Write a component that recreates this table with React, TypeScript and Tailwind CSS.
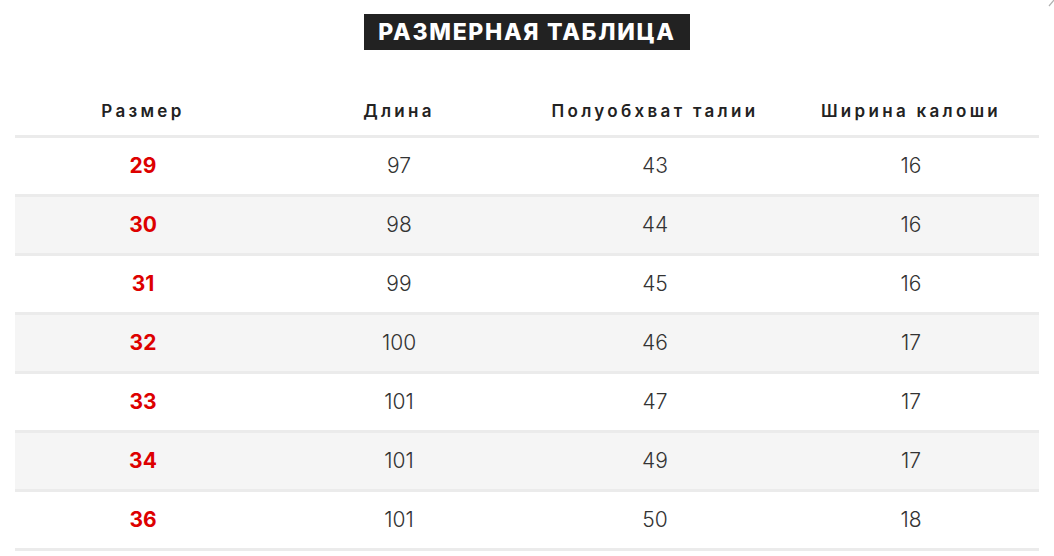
const rows = [
  ["29", "97", "43", "16"],
  ["30", "98", "44", "16"],
  ["31", "99", "45", "16"],
  ["32", "100", "46", "17"],
  ["33", "101", "47", "17"],
  ["34", "101", "49", "17"],
  ["36", "101", "50", "18"],
];

const headers = ["Размер", "Длина", "Полуобхват талии", "Ширина калоши"];

export default function App() {
  return (
    <div className="relative min-h-[556px] w-[1054px] bg-white font-['Inter',sans-serif]">
      {/* corner mark */}
      <svg className="absolute right-0 top-0" width="8" height="8" viewBox="0 0 8 8">
        <line x1="3" y1="6" x2="8" y2="0" stroke="#b0b0b0" strokeWidth="1.2" />
      </svg>

      <div className="flex justify-center pt-[14px]">
        <h2 className="flex h-[36px] w-[326px] items-center justify-center bg-[#222222] text-[23px] font-extrabold uppercase tracking-[1.7px] text-white">
          Размерная таблица
        </h2>
      </div>

      <div className="mx-[15px] mt-[37px]">
        <div className="grid h-[51px] grid-cols-4 items-center border-b-[3px] border-[#ebebeb]">
          {headers.map((h) => (
            <div key={h} className="pt-[1px] text-center text-[17px] font-semibold tracking-[3.3px] text-[#222222]">
              {h}
            </div>
          ))}
        </div>
        {rows.map((r, i) => (
          <div
            key={r[0]}
            className={`grid h-[59px] grid-cols-4 items-center border-b-[3px] border-[#ebebeb] ${
              i % 2 === 1 ? "bg-[#f5f5f5]" : "bg-white"
            }`}
          >
            <div className="text-center text-[21px] font-bold text-[#dd0000]">{r[0]}</div>
            <div className="text-center text-[21px] font-light text-[#333333]">{r[1]}</div>
            <div className="text-center text-[21px] font-light text-[#333333]">{r[2]}</div>
            <div className="text-center text-[21px] font-light text-[#333333]">{r[3]}</div>
          </div>
        ))}
      </div>
    </div>
  );
}
